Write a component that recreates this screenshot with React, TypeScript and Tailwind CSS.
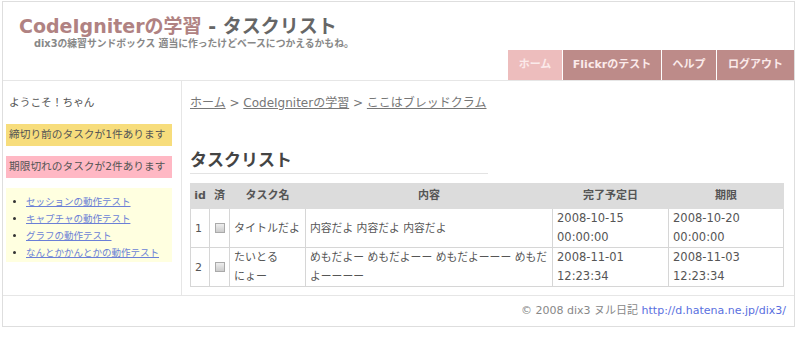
import React from "react";

const font = { fontFamily: '"DejaVu Sans", "Noto Sans CJK JP", sans-serif' };

export default function App() {
  const rows = [
    { id: "1", name: ["タイトルだよ"], body: ["内容だよ 内容だよ 内容だよ"], due: ["2008-10-15", "00:00:00"], lim: ["2008-10-20", "00:00:00"] },
    { id: "2", name: ["たいとる", "にょー"], body: ["めもだよー めもだよーー めもだよーーー めもだ", "よーーーー"], due: ["2008-11-01", "12:23:34"], lim: ["2008-11-03", "12:23:34"] },
  ];
  return (
    <div className="w-[800px] h-[342px] bg-white overflow-hidden" style={font}>
      <div className="ml-[2px] mt-[1px] w-[793px] border border-[#dedede] bg-white">
        {/* header */}
        <div className="h-[79px] flex flex-col border-b border-[#e6e6e6]">
          <div className="pl-[16px] pt-[12px] leading-[24px] text-[19px] font-bold text-[#666] whitespace-nowrap">
            <span className="text-[#b08282]">CodeIgniterの学習</span> - タスクリスト
          </div>
          <div className="pl-[31px] text-[9.8px] font-bold leading-[12px] text-[#888] whitespace-nowrap">
            dix3の練習サンドボックス 適当に作ったけどベースにつかえるかもね。
          </div>
          <div className="mt-auto flex justify-end">
            <div className="h-[30px] w-[55px] bg-[#edbdbd] text-[#fbeaea] text-[11px] font-bold flex items-center justify-center border-r border-white">ホーム</div>
            <div className="h-[30px] w-[99px] bg-[#bd8b89] text-[#fbeaea] text-[11px] font-bold flex items-center justify-center border-r border-white">Flickrのテスト</div>
            <div className="h-[30px] w-[55px] bg-[#bd8b89] text-[#fbeaea] text-[11px] font-bold flex items-center justify-center border-r border-white">ヘルプ</div>
            <div className="h-[30px] w-[77px] bg-[#bd8b89] text-[#fbeaea] text-[11px] font-bold flex items-center justify-center">ログアウト</div>
          </div>
        </div>
        {/* body */}
        <div className="flex h-[215px] border-b border-[#e6e6e6]">
          <div className="w-[179px] border-r border-[#e6e6e6] pt-[14px] px-[3px] text-[10.7px] text-[#555]">
            <div className="pl-[3px] leading-[16px]">ようこそ！ちゃん</div>
            <div className="mt-[13px] h-[22px] w-[166px] bg-[#f7dd7c] pl-[3px] leading-[22px] whitespace-nowrap">締切り前のタスクが1件あります</div>
            <div className="mt-[10px] h-[22px] w-[166px] bg-[#ffb8c4] pl-[3px] leading-[22px] whitespace-nowrap">期限切れのタスクが2件あります</div>
            <div className="mt-[10px] w-[166px] h-[74px] bg-[#ffffe0] pt-[5px]">
              <ul className="list-disc pl-[20px] text-[9.5px] leading-[17px] text-[#333]">
                <li><a className="underline text-[#6b7fd6]">セッションの動作テスト</a></li>
                <li><a className="underline text-[#6b7fd6]">キャプチャの動作テスト</a></li>
                <li><a className="underline text-[#6b7fd6]">グラフの動作テスト</a></li>
                <li><a className="underline text-[#6b7fd6]">なんとかかんとかの動作テスト</a></li>
              </ul>
            </div>
          </div>
          <div className="flex-1 pl-[8px] pt-[14px] text-[11px] text-[#555]">
            <div className="leading-[16px] text-[12px] text-[#777] whitespace-nowrap">
              <a className="underline">ホーム</a> &gt; <a className="underline">CodeIgniterの学習</a> &gt; <a className="underline">ここはブレッドクラム</a>
            </div>
            <div className="mt-[38px] w-[298px] border-b border-[#e3e3e3] text-[17px] font-bold leading-[22px] text-[#444] pb-[2px]">タスクリスト</div>
            <table className="mt-[9px] w-[594px] table-fixed border-collapse text-[11px] text-[#555]">
              <thead>
                <tr className="bg-[#dcdcdc] h-[25px] font-bold">
                  <th className="w-[19px] border border-[#dcdcdc] font-bold">id</th>
                  <th className="w-[20px] border border-[#dcdcdc] font-bold">済</th>
                  <th className="w-[76px] border border-[#dcdcdc] font-bold">タスク名</th>
                  <th className="w-[247px] border border-[#dcdcdc] font-bold">内容</th>
                  <th className="w-[116px] border border-[#dcdcdc] font-bold">完了予定日</th>
                  <th className="border border-[#dcdcdc] font-bold">期限</th>
                </tr>
              </thead>
              <tbody>
                {rows.map((r) => (
                  <tr key={r.id} className="h-[39px]">
                    <td className="border border-[#d6d6d6] px-[4px] leading-[19px]">{r.id}</td>
                    <td className="border border-[#d6d6d6] text-center">
                      <span className="inline-block w-[10px] h-[10px] border border-[#aaa] bg-gradient-to-b from-[#eee] to-[#ccc] align-middle"></span>
                    </td>
                    <td className="border border-[#d6d6d6] px-[4px] leading-[19px] whitespace-nowrap overflow-hidden">
                      {r.name.map((l, i) => (<div key={i}>{l}</div>))}
                    </td>
                    <td className="border border-[#d6d6d6] pl-[4px] leading-[19px] whitespace-nowrap overflow-hidden text-[10.8px]">
                      {r.body.map((l, i) => (<div key={i}>{l}</div>))}
                    </td>
                    <td className="border border-[#d6d6d6] px-[4px] leading-[19px] text-[11.5px]">{r.due[0]}<br />{r.due[1]}</td>
                    <td className="border border-[#d6d6d6] px-[4px] leading-[19px] text-[11.5px]">{r.lim[0]}<br />{r.lim[1]}</td>
                  </tr>
                ))}
              </tbody>
            </table>
          </div>
        </div>
        {/* footer */}
        <div className="h-[30px] flex items-center justify-end pr-[8px] text-[11px] text-[#888]">
          © 2008 dix3 ヌル日記&nbsp;<a className="text-[#5a6fe0]">http://d.hatena.ne.jp/dix3/</a>
        </div>
      </div>
    </div>
  );
}
